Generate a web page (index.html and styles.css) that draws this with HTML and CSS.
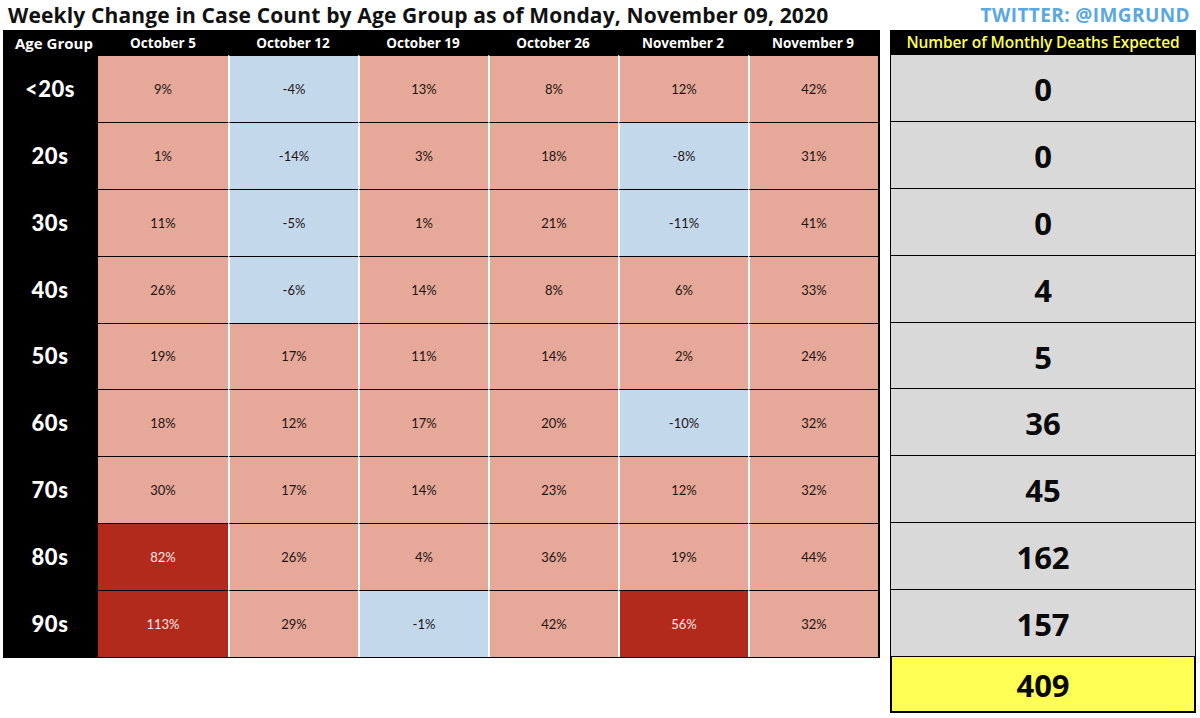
FILE: index.html
```html
<!DOCTYPE html>
<html>
<head>
<meta charset="utf-8">
<link rel="stylesheet" href="styles.css">
</head>
<body>
<div class="page">
  <div class="topbar">
    <h1 class="title">Weekly Change in Case Count by Age Group as of Monday, November 09, 2020</h1>
    <div class="twitter">TWITTER: @IMGRUND</div>
  </div>
  <div class="content">
    <div class="table">
      <div class="hd age-hd">Age Group</div>
      <div class="hd">October 5</div>
      <div class="hd">October 12</div>
      <div class="hd">October 19</div>
      <div class="hd">October 26</div>
      <div class="hd">November 2</div>
      <div class="hd">November 9</div>

      <div class="age">&lt;20s</div>
      <div class="c p first">9%</div><div class="c b">-4%</div><div class="c p">13%</div><div class="c p">8%</div><div class="c p">12%</div><div class="c p">42%</div>

      <div class="age">20s</div>
      <div class="c p first">1%</div><div class="c b">-14%</div><div class="c p">3%</div><div class="c p">18%</div><div class="c b">-8%</div><div class="c p">31%</div>

      <div class="age">30s</div>
      <div class="c p first">11%</div><div class="c b">-5%</div><div class="c p">1%</div><div class="c p">21%</div><div class="c b">-11%</div><div class="c p">41%</div>

      <div class="age">40s</div>
      <div class="c p first">26%</div><div class="c b">-6%</div><div class="c p">14%</div><div class="c p">8%</div><div class="c p">6%</div><div class="c p">33%</div>

      <div class="age">50s</div>
      <div class="c p first">19%</div><div class="c p">17%</div><div class="c p">11%</div><div class="c p">14%</div><div class="c p">2%</div><div class="c p">24%</div>

      <div class="age">60s</div>
      <div class="c p first">18%</div><div class="c p">12%</div><div class="c p">17%</div><div class="c p">20%</div><div class="c b">-10%</div><div class="c p">32%</div>

      <div class="age">70s</div>
      <div class="c p first">30%</div><div class="c p">17%</div><div class="c p">14%</div><div class="c p">23%</div><div class="c p">12%</div><div class="c p">32%</div>

      <div class="age">80s</div>
      <div class="c r first">82%</div><div class="c p">26%</div><div class="c p">4%</div><div class="c p">36%</div><div class="c p">19%</div><div class="c p">44%</div>

      <div class="age">90s</div>
      <div class="c r first">113%</div><div class="c p">29%</div><div class="c b">-1%</div><div class="c p">42%</div><div class="c r">56%</div><div class="c p">32%</div>
    </div>

    <div class="deaths">
      <div class="d-hd">Number of Monthly Deaths Expected</div>
      <div class="d">0</div>
      <div class="d">0</div>
      <div class="d">0</div>
      <div class="d">4</div>
      <div class="d">5</div>
      <div class="d">36</div>
      <div class="d">45</div>
      <div class="d">162</div>
      <div class="d">157</div>
      <div class="d total">409</div>
    </div>
  </div>
</div>
</body>
</html>
```

FILE: styles.css
```css
* { box-sizing: border-box; }
html, body { margin: 0; padding: 0; background: #fff; }
body { width: 1200px; height: 718px; overflow: hidden; font-family: "Open Sans", "Liberation Sans", sans-serif; }

.page { padding: 0 4px 0 3px; }

.topbar {
  height: 30px;
  display: flex;
  align-items: center;
  justify-content: space-between;
}
.title {
  margin: 0 0 0 5px;
  font-family: "Open Sans", sans-serif;
  font-weight: 700;
  font-size: 21px;
  color: #111;
  letter-spacing: 0.15px;
  white-space: nowrap;
  line-height: 30px;
}
.twitter {
  font-family: "Open Sans", sans-serif;
  font-weight: 700;
  font-size: 19px;
  color: #5ba8e0;
  margin-right: 6px;
  line-height: 30px;
  letter-spacing: 0.4px;
}

.content {
  display: flex;
  gap: 10px;
  align-items: flex-start;
}

.table {
  width: 877px;
  height: 628px;
  background: #000;
  display: grid;
  grid-template-columns: 95px repeat(6, 1fr);
  grid-template-rows: 25px repeat(9, 1fr);
  padding: 0 2px 1px 0;
}

.hd {
  color: #fff;
  font-family: "Open Sans", sans-serif;
  font-weight: 700;
  font-size: 13.5px;
  display: flex;
  align-items: center;
  justify-content: center;
  padding-top: 1px;
}
.age-hd { font-size: 15px; justify-content: flex-start; padding-left: 12px; }

.age {
  color: #fff;
  font-family: "Lato", sans-serif;
  font-weight: 900;
  font-size: 22px;
  letter-spacing: 0.5px;
  display: flex;
  align-items: center;
  justify-content: center;
  padding-right: 1px;
}

.c {
  display: flex;
  align-items: center;
  justify-content: center;
  font-family: "Lato", sans-serif;
  font-size: 13px;
  color: #1f1412;
  border-top: 1px solid #000;
  border-left: 2px solid #fff;
}
.c.first { border-left: none; }
.p { background: #e5a899; }
.b { background: #c4d8ec; }
.r { background: #b22a1c; color: #fbe9e6; }

.deaths {
  width: 306px;
  display: grid;
  grid-template-rows: 24px repeat(9, 66.9px) 57px;
  height: 685px;
}
.d-hd {
  background: #000;
  color: #ffff55;
  font-family: "Open Sans", sans-serif;
  font-weight: 600;
  font-size: 15.5px;
  display: flex;
  align-items: center;
  justify-content: center;
  letter-spacing: -0.1px;
}
.d {
  background: #d9d9d9;
  border: 1px solid #000;
  border-bottom: none;
  display: flex;
  align-items: center;
  justify-content: center;
  font-family: "Open Sans", sans-serif;
  font-weight: 700;
  font-size: 31px;
  color: #0a0a0a;
  padding-top: 2px;
}
.d.total {
  background: #ffff55;
  border: 2px solid #000;
  border-top: 1px solid #000;
}
```
